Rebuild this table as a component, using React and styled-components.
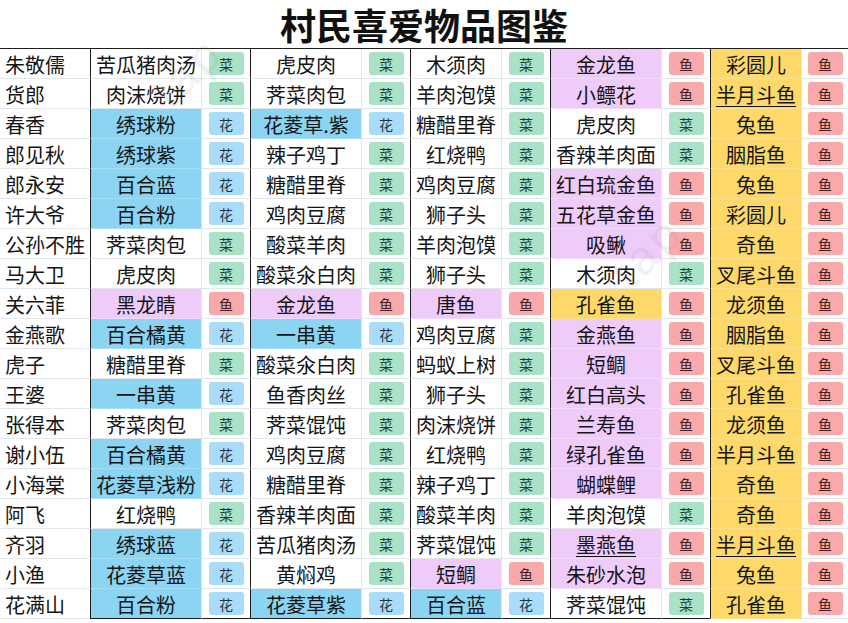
import React from "react";
import styled, { createGlobalStyle } from "styled-components";

const GlobalStyle = createGlobalStyle`
  html, body {
    margin: 0;
    padding: 0;
    background: #ffffff;
  }
  body {
    font-family: "Noto Sans CJK SC", "Noto Sans", sans-serif;
    color: #151515;
  }
`;

const Page = styled.div`
  position: relative;
  width: 848px;
  height: 623px;
  overflow: hidden;
  background: #fff;
`;

const Title = styled.h1`
  margin: 0;
  height: 48px;
  display: flex;
  align-items: center;
  justify-content: center;
  padding-top: 2px;
  box-sizing: border-box;
  font-size: 36px;
  line-height: 1.2;
  font-weight: 700;
  color: #111;
`;

const Table = styled.div`
  display: grid;
  grid-template-columns: 90px 112px 48px 112px 48px 92px 48px 112px 48px 92px 46px;
  grid-auto-rows: 30px;
  border-top: 1px solid #1e1e1e;
`;

const fills = {
  b: "#8bd5f3",
  p: "#eecbf9",
  y: "#fed96a",
  "": "#ffffff",
};

const lineFor = {
  b: "#a6def5",
  p: "#f3dafb",
  y: "#fde08a",
  "": "#e2e6eb",
};

const NameCell = styled.div`
  box-sizing: border-box;
  display: flex;
  align-items: center;
  padding: 1px 0 0 5px;
  font-size: 20px;
  border-bottom: 1px solid #e2e6eb;
  white-space: nowrap;
`;

const ItemCell = styled.div`
  box-sizing: border-box;
  display: flex;
  align-items: center;
  justify-content: center;
  padding-top: 1px;
  font-size: 20px;
  white-space: nowrap;
  background: ${(p) => fills[p.$fill]};
  border-left: 1px solid #1e1e1e;
  border-right: 1px solid #e2e6eb;
  border-bottom: 1px solid ${(p) => (p.$last && !p.$open ? "#1e1e1e" : lineFor[p.$fill])};
  text-decoration: ${(p) => (p.$link ? "underline" : "none")};
  text-underline-offset: 3px;
  text-decoration-thickness: 1px;
`;

const TagCell = styled.div`
  box-sizing: border-box;
  display: flex;
  align-items: center;
  justify-content: center;
  border-bottom: 1px solid ${(p) => (p.$last && !p.$open ? "#1e1e1e" : "#e2e6eb")};
`;

const tagColors = {
  菜: { bg: "#a9e2c6", fg: "#1e3b2c" },
  花: { bg: "#a8dcf8", fg: "#1d3443" },
  鱼: { bg: "#f9a9a9", fg: "#3f1f1f" },
};

const Tag = styled.span`
  display: inline-flex;
  align-items: center;
  justify-content: center;
  width: 35px;
  height: 23px;
  border-radius: 3px;
  font-size: 14px;
  background: ${(p) => tagColors[p.$kind].bg};
  color: ${(p) => tagColors[p.$kind].fg};
`;

// faint diagonal watermark over the sheet
const Watermark = styled.div`
  position: absolute;
  left: ${(p) => p.$x}px;
  top: ${(p) => p.$y}px;
  transform: rotate(-45deg);
  transform-origin: left top;
  font-family: "Liberation Sans", sans-serif;
  font-size: 48px;
  color: rgba(140, 140, 140, 0.13);
  pointer-events: none;
  white-space: nowrap;
  letter-spacing: 4px;
`;

// item|tag|fill  (fill: b blue, p purple, y yellow, blank none; trailing * = underlined)
const rows = [
  ["朱敬儒", "苦瓜猪肉汤|菜", "虎皮肉|菜", "木须肉|菜", "金龙鱼|鱼|p", "彩圆儿|鱼|y"],
  ["货郎", "肉沫烧饼|菜", "荠菜肉包|菜", "羊肉泡馍|菜", "小鳔花|鱼|p", "半月斗鱼|鱼|y*"],
  ["春香", "绣球粉|花|b", "花菱草.紫|花|b", "糖醋里脊|菜", "虎皮肉|菜", "兔鱼|鱼|y"],
  ["郎见秋", "绣球紫|花|b", "辣子鸡丁|菜", "红烧鸭|菜", "香辣羊肉面|菜", "胭脂鱼|鱼|y"],
  ["郎永安", "百合蓝|花|b", "糖醋里脊|菜", "鸡肉豆腐|菜", "红白琉金鱼|鱼|p", "兔鱼|鱼|y"],
  ["许大爷", "百合粉|花|b", "鸡肉豆腐|菜", "狮子头|菜", "五花草金鱼|鱼|p", "彩圆儿|鱼|y"],
  ["公孙不胜", "荠菜肉包|菜", "酸菜羊肉|菜", "羊肉泡馍|菜", "吸鳅|鱼|p", "奇鱼|鱼|y"],
  ["马大卫", "虎皮肉|菜", "酸菜氽白肉|菜", "狮子头|菜", "木须肉|菜", "叉尾斗鱼|鱼|y"],
  ["关六菲", "黑龙睛|鱼|p", "金龙鱼|鱼|p", "唐鱼|鱼|p", "孔雀鱼|鱼|y", "龙须鱼|鱼|y"],
  ["金燕歌", "百合橘黄|花|b", "一串黄|花|b", "鸡肉豆腐|菜", "金燕鱼|鱼|p", "胭脂鱼|鱼|y"],
  ["虎子", "糖醋里脊|菜", "酸菜氽白肉|菜", "蚂蚁上树|菜", "短鲷|鱼|p", "叉尾斗鱼|鱼|y"],
  ["王婆", "一串黄|花|b", "鱼香肉丝|菜", "狮子头|菜", "红白高头|鱼|p", "孔雀鱼|鱼|y"],
  ["张得本", "荠菜肉包|菜", "荠菜馄饨|菜", "肉沫烧饼|菜", "兰寿鱼|鱼|p", "龙须鱼|鱼|y"],
  ["谢小伍", "百合橘黄|花|b", "鸡肉豆腐|菜", "红烧鸭|菜", "绿孔雀鱼|鱼|p", "半月斗鱼|鱼|y"],
  ["小海棠", "花菱草浅粉|花|b", "糖醋里脊|菜", "辣子鸡丁|菜", "蝴蝶鲤|鱼|p", "奇鱼|鱼|y"],
  ["阿飞", "红烧鸭|菜", "香辣羊肉面|菜", "酸菜羊肉|菜", "羊肉泡馍|菜", "奇鱼|鱼|y"],
  ["齐羽", "绣球蓝|花|b", "苦瓜猪肉汤|菜", "荠菜馄饨|菜", "墨燕鱼|鱼|p*", "半月斗鱼|鱼|y*"],
  ["小渔", "花菱草蓝|花|b", "黄焖鸡|菜", "短鲷|鱼|p", "朱砂水泡|鱼|p", "兔鱼|鱼|y"],
  ["花满山", "百合粉|花|b", "花菱草紫|花|b", "百合蓝|花|b", "荠菜馄饨|菜", "孔雀鱼|鱼|y"],
];

function parse(cell) {
  const [item, tag, raw = ""] = cell.split("|");
  const link = raw.endsWith("*");
  return { item, tag, fill: raw.replace("*", ""), link };
}

export default function App() {
  return (
    <>
      <GlobalStyle />
      <Page>
        <Title>村民喜爱物品图鉴</Title>
        <Table>
          {rows.map(([name, ...groups], r) => {
            const last = r === rows.length - 1;
            return (
              <React.Fragment key={name + r}>
                <NameCell>{name}</NameCell>
                {groups.map((g, i) => {
                  const { item, tag, fill, link } = parse(g);
                  const open = i === groups.length - 1;
                  return (
                    <React.Fragment key={i}>
                      <ItemCell $fill={fill} $link={link} $last={last} $open={open}>
                        {item}
                      </ItemCell>
                      <TagCell $last={last} $open={open}>
                        <Tag $kind={tag}>{tag}</Tag>
                      </TagCell>
                    </React.Fragment>
                  );
                })}
              </React.Fragment>
            );
          })}
        </Table>
        <Watermark $x={140} $y={80}>tap</Watermark>
        <Watermark $x={600} $y={260}>tap</Watermark>
      </Page>
    </>
  );
}
